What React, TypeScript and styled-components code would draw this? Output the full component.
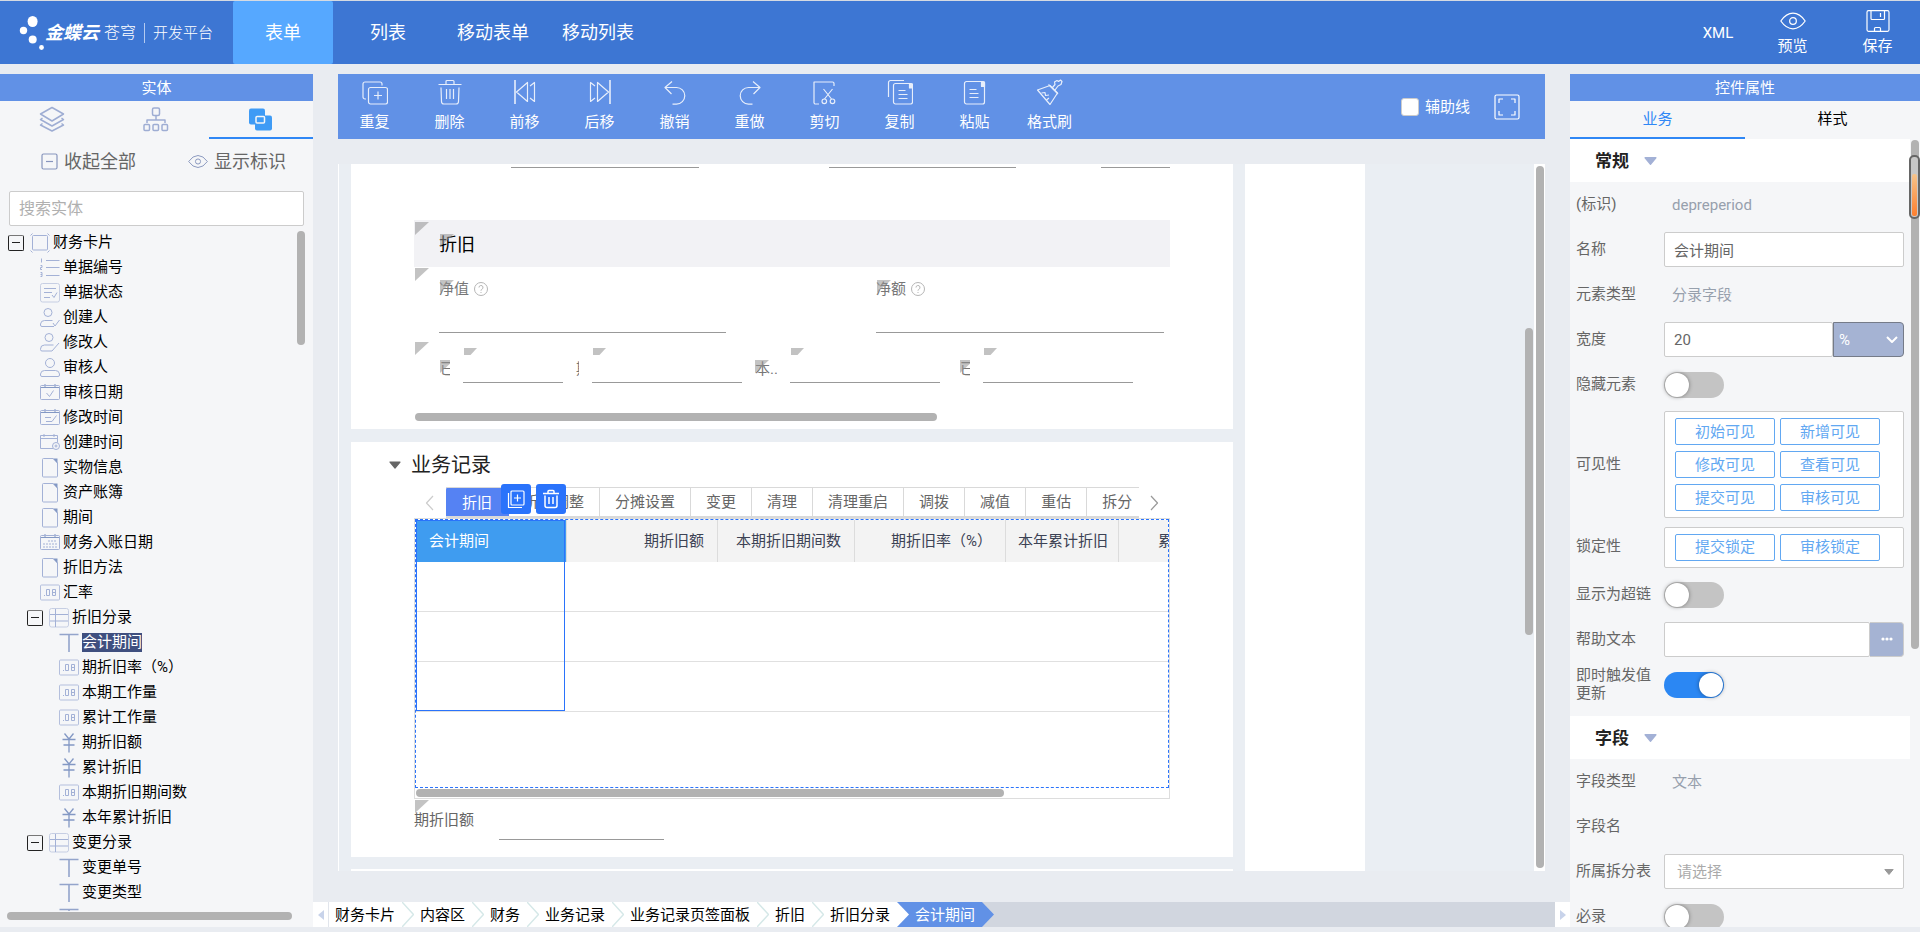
import React from 'react';
import styled, { createGlobalStyle } from 'styled-components';

const fontStack = `Roboto, "Noto Sans CJK SC", sans-serif`;

const GlobalStyle = createGlobalStyle`
  *, *::before, *::after { box-sizing: border-box; }
  body { margin: 0; background: #e9ecf1; font-family: ${fontStack}; font-size: 15px; line-height: 18px; color: #000; }
  button, input, select { font: inherit; color: inherit; margin: 0; padding: 0; border: 0; background: none; border-radius: 0; }
  button { cursor: pointer; white-space: nowrap; }
  a { color: inherit; text-decoration: none; }
  ul, ol { list-style: none; margin: 0; padding: 0; }
  h1, h2, h3, p { margin: 0; font: inherit; }
  svg { display: block; flex: none; }
`;

/* ---------- page frame ---------- */

const Page = styled.div`
  display: flex;
  flex-direction: column;
  height: 100vh;
  min-width: 1200px;
  overflow: hidden;
  border-top: 1px solid #d5dae2;
`;

const Header = styled.header`
  display: flex;
  align-items: stretch;
  flex: none;
  height: 63px;
  color: #fff;
  background: #3d76d3;
`;

const Brand = styled.a`
  display: flex;
  align-items: center;
  width: 233px;
  padding-left: 18px;
  white-space: nowrap;
`;

const BrandName = styled.strong`
  margin-left: 1px;
  font-size: 18px;
  font-style: italic;
  font-weight: 700;
`;

const BrandSub = styled.span`
  margin-left: 5px;
  font-size: 16px;
  font-weight: 300;
`;

const BrandPlatform = styled.span`
  display: flex;
  align-items: center;
  height: 20px;
  margin-left: 8px;
  padding-left: 8px;
  font-weight: 300;
  border-left: 1px solid #b4caf0;
`;

const MainNav = styled.nav`
  display: flex;
  gap: 5px;
  flex: 1;
`;

const NavItem = styled.button<{ $active?: boolean }>`
  width: 100px;
  font-size: 18px;
  border-radius: 2px;
  background: ${(p) => (p.$active ? '#56a8ff' : 'transparent')};
`;

const HeaderActions = styled.div`
  display: flex;
  align-items: center;
`;

const HeaderAction = styled.button`
  display: flex;
  flex-direction: column;
  align-items: center;
  justify-content: center;
  width: 85px;
  gap: 5px;
  height: 63px;
  &:first-child { width: 64px; }
`;

const Workspace = styled.div`
  display: flex;
  flex: 1;
  min-height: 0;
  padding: 10px 0 5px;
`;

const PanelTitle = styled.h2`
  display: flex;
  align-items: center;
  justify-content: center;
  flex: none;
  height: 27px;
  color: #fff;
  background: #6191e6;
`;

const PanelTabs = styled.div`
  display: flex;
  flex: none;
  height: 38px;
`;

const PanelTab = styled.button<{ $active?: boolean }>`
  display: flex;
  align-items: center;
  justify-content: center;
  flex: 1;
  color: ${(p) => (p.$active ? '#2f87f5' : '#000')};
  border-bottom: 2px solid ${(p) => (p.$active ? '#2f87f5' : 'transparent')};
`;

const Thumb = styled.div`
  border-radius: 4px;
  background: #b2b2b2;
`;

/* ---------- entity panel ---------- */

const EntityPanel = styled.aside`
  position: relative;
  display: flex;
  flex-direction: column;
  flex: none;
  width: 313px;
  background: #f5f6f8;
`;

const TreeTools = styled.div`
  display: flex;
  justify-content: space-between;
  padding: 11px 27px 18px 41px;
`;

const TreeTool = styled.button`
  display: flex;
  align-items: center;
  gap: 6px;
  height: 23px;
  color: #666;
  font-size: 18px;
`;

const SearchBox = styled.input`
  height: 35px;
  margin: 0 9px;
  padding: 0 9px;
  font-size: 16px;
  background: #fff;
  border: 1px solid #ccc;
  border-radius: 2px;
  &::placeholder { color: #b0b0b0; opacity: 1; }
`;

const Tree = styled.ul`
  flex: 1;
  min-height: 0;
  margin-top: 4px;
  overflow: hidden;
`;

const TreeRow = styled.li<{ $level: number }>`
  display: flex;
  align-items: center;
  height: 25px;
  padding-left: ${(p) => [8, 40, 27, 59][p.$level]}px;
`;

const Expander = styled.button`
  display: flex;
  align-items: center;
  justify-content: center;
  width: 16px;
  height: 16px;
  margin-right: 6px;
  border: 1px solid #222;
  border-top-color: #777;
  border-radius: 2px;
  &::before { content: ''; width: 8px; height: 1px; background: #222; }
`;

const TreeLabel = styled.button<{ $selected?: boolean }>`
  height: 19px;
  margin-left: 3px;
  line-height: 19px;
  color: ${(p) => (p.$selected ? '#fff' : '#000')};
  background: ${(p) => (p.$selected ? '#3f4f7f' : 'transparent')};
`;

const TreeScrollX = styled(Thumb)`
  height: 8px;
  margin: 1px 21px 7px 7px;
`;

const TreeScrollY = styled(Thumb)`
  position: absolute;
  top: 157px;
  right: 8px;
  width: 8px;
  height: 114px;
`;

/* ---------- designer ---------- */

const Designer = styled.main`
  display: flex;
  flex-direction: column;
  flex: 1;
  min-width: 0;
`;

const Toolbar = styled.div`
  display: flex;
  align-items: center;
  flex: none;
  height: 65px;
  margin: 0 25px;
  color: #fff;
  background: #6191e6;
`;

const ToolButton = styled.button`
  display: flex;
  flex-direction: column;
  align-items: center;
  gap: 8px;
  width: 75px;
  height: 55px;
  padding-right: 2px;
  svg { opacity: 0.85; }
`;

const ToolbarEnd = styled.div`
  display: flex;
  align-items: center;
  gap: 24px;
  margin-left: auto;
  padding-right: 25px;
`;

const GuideToggle = styled.label`
  display: flex;
  align-items: center;
  gap: 6px;
  input {
    appearance: none;
    width: 18px;
    height: 18px;
    background: #fff;
    border: 1px solid #ccc;
    border-radius: 3px;
  }
`;

const Canvas = styled.div`
  position: relative;
  display: flex;
  flex: 1;
  min-height: 0;
  margin: 25px 25px 0;
  padding-left: 12px;
  overflow: hidden;
  background: #eaeef3;
  border-left: 1px solid #fff;
`;

const Cards = styled.div`
  display: flex;
  flex-direction: column;
  flex: 882 1 0;
  min-width: 0;
`;

const SideSheet = styled.div`
  flex: 120 1 0;
  margin-left: 12px;
  background: #fff;
`;

const Spare = styled.div`
  flex: 169 1 0;
`;

const Track = styled.div`
  width: 11px;
  padding: 2px 1px 3px 2px;
  background: #fff;
  display: flex;
`;

const TrackThumb = styled(Thumb)`
  flex: 1;
`;

const InnerThumb = styled(Thumb)`
  position: absolute;
  top: 164px;
  right: 12px;
  width: 8px;
  height: 307px;
`;

const Card = styled.section`
  flex: none;
  margin-bottom: 13px;
  padding: 0 63px 8px;
  background: #fff;
  &:nth-of-type(2) { margin-bottom: 12px; }
`;

const LineInput = styled.input`
  display: block;
  width: 100%;
  height: 32px;
  border-bottom: 1px solid #999;
`;

const CutFields = styled.div`
  display: grid;
  grid-template-columns: 97fr 188fr 130fr 187fr 85fr 69fr;
  height: 56px;
  ${LineInput} { height: 4px; }
  ${LineInput}:nth-child(1) { grid-column: 2; }
  ${LineInput}:nth-child(2) { grid-column: 4; }
  ${LineInput}:nth-child(3) { grid-column: 6; }
`;

const Corner = styled.i<{ $x?: number; $y?: number }>`
  position: absolute;
  left: ${(p) => p.$x ?? 1}px;
  top: ${(p) => p.$y ?? 1}px;
  width: 14px;
  height: 13px;
  background: rgba(145, 145, 145, 0.55);
  clip-path: polygon(0 0, 100% 0, 0 100%);
`;

const GroupTitle = styled.div`
  position: relative;
  display: flex;
  align-items: center;
  height: 47px;
  padding: 2px 0 0 25px;
  font-size: 18px;
  background: #f2f2f5;
`;

const FieldPair = styled.div`
  position: relative;
  display: grid;
  grid-template-columns: 287fr 288fr;
  column-gap: 150px;
  height: 74px;
  padding: 13px 6px 8px 25px;
`;

const Field = styled.label`
  position: relative;
  display: flex;
  flex-direction: column;
  justify-content: space-between;
  height: 53px;
  color: #777;
  ${LineInput} { height: 24px; }
`;

const FieldLabel = styled.span`
  display: flex;
  align-items: center;
  gap: 5px;
`;

const MiniRow = styled.div`
  position: relative;
  display: flex;
  gap: 13px;
  height: 72px;
  padding: 7px 0 0 26px;
`;

const MiniLabel = styled.span<{ $w: number; $pad?: number }>`
  position: relative;
  width: ${(p) => p.$w}px;
  height: 18px;
  margin-top: 12px;
  padding-left: ${(p) => p.$pad ?? 0}px;
  overflow: hidden;
  color: #777;
  white-space: nowrap;
`;

const MiniField = styled.span<{ $w: number }>`
  position: relative;
  width: ${(p) => p.$w}px;
  height: 35px;
  &::before {
    content: '';
    position: absolute;
    left: 1px;
    top: 0;
    width: 13px;
    height: 7px;
    background: #c2c2c2;
    clip-path: polygon(0 0, 100% 0, 50% 100%, 0 100%);
  }
  ${LineInput} { height: 35px; }
`;

const FormScroll = styled(Thumb)`
  width: 69%;
  height: 8px;
  margin: 0 0 0 1px;
`;

const CardTitle = styled.button`
  display: flex;
  align-items: center;
  gap: 10px;
  height: 45px;
  margin-left: -25px;
  font-size: 20px;
  color: #222;
`;

const TabStrip = styled.div`
  position: relative;
  display: flex;
  align-items: center;
  height: 31px;
`;

const TabArrow = styled.button`
  display: flex;
  justify-content: center;
  flex: none;
  width: 32px;
  padding-right: 2px;
  &:last-of-type { padding: 0; width: 31px; }
`;

const TabList = styled.div`
  display: flex;
  flex: 1;
  min-width: 0;
  height: 31px;
  overflow: hidden;
  border-top: 1px solid #d9d9d9;
  border-bottom: 2px solid #d9d9d9;
`;

const Tab = styled.button<{ $active?: boolean }>`
  flex: none;
  height: ${(p) => (p.$active ? '31px' : '28px')};
  margin: ${(p) => (p.$active ? '-1px 0 -2px' : '0')};
  padding: ${(p) => (p.$active ? '0 16px' : '0 15px')};
  color: ${(p) => (p.$active ? '#fff' : '#666')};
  background: ${(p) => (p.$active ? '#5582f3' : '#fff')};
  border-right: 1px solid ${(p) => (p.$active ? '#5582f3' : '#d9d9d9')};
  border-radius: ${(p) => (p.$active ? '3px 0 0 3px' : '0')};
`;

const QuickActions = styled.div`
  position: absolute;
  left: 87px;
  top: -3px;
  display: flex;
  gap: 5px;
`;

const QuickAction = styled.button`
  display: flex;
  align-items: center;
  justify-content: center;
  width: 30px;
  height: 30px;
  color: #fff;
  background: #2a73fb;
  border-radius: 3px;
`;

const GridFrame = styled.div`
  height: 281px;
  border: 1px solid #ddd;
`;

const GridBox = styled.div`
  position: relative;
  height: 269px;
  overflow: hidden;
  border: 1px dashed #2a73fb;
`;

const Grid = styled.table`
  width: 816px;
  table-layout: fixed;
  border-collapse: separate;
  border-spacing: 0;
  th {
    height: 42px;
    padding: 0 13px;
    font-weight: 400;
    text-align: right;
    white-space: nowrap;
    color: #3c4254;
    background: #f3f3f3;
    border-right: 1px solid #dcdcdc;
  }
  th:nth-child(5) { padding: 0 10px; }
  th:first-child {
    text-align: left;
    color: #fff;
    background: #3f9cf0;
  }
  td {
    height: 50px;
    padding: 0;
    border-bottom: 1px solid #e0e0e0;
  }
`;

const ColumnOutline = styled.div`
  position: absolute;
  left: 0;
  top: 0;
  width: 149px;
  height: 191px;
  border: 1px solid #2a73fb;
`;

const GridScroll = styled(Thumb)`
  width: 78%;
  height: 8px;
  margin: 1px 0 0 1px;
`;

const SummaryField = styled.label`
  position: relative;
  display: flex;
  gap: 25px;
  height: 50px;
  padding-top: 12px;
  color: #666;
  ${LineInput} { width: 165px; height: 29px; }
`;

const Crumbs = styled.nav`
  display: flex;
  flex: none;
  height: 25px;
  margin-top: 31px;
  background: #d1d6df;
`;

const CrumbArrow = styled.button<{ $end?: boolean }>`
  display: flex;
  align-items: center;
  justify-content: center;
  width: 15px;
  margin-left: ${(p) => (p.$end ? 'auto' : '0')};
  background: #fff;
`;

const CrumbList = styled.ol`
  display: flex;
  height: 25px;
  border-left: 1px solid #e1e5ec;
`;

const Crumb = styled.li<{ $current?: boolean }>`
  display: flex;
  align-items: center;
  color: ${(p) => (p.$current ? '#fff' : '#000')};
  background: ${(p) => (p.$current ? '#6191e6' : '#fff')};
  a { margin: 0 7px 0 6px; white-space: nowrap; }
`;

/* ---------- properties panel ---------- */

const PropsPanel = styled.aside`
  position: relative;
  display: flex;
  flex-direction: column;
  flex: none;
  width: 350px;
  overflow: hidden;
  background: #f5f6f8;
`;

const PropsBody = styled.div`
  flex: 1;
  min-height: 0;
  overflow: hidden;
  padding-right: 10px;
`;

const Section = styled.button`
  display: flex;
  align-items: center;
  gap: 15px;
  width: 100%;
  height: 43px;
  padding-left: 25px;
  color: #222;
  font-size: 17px;
  font-weight: 700;
  background: #fff;
`;

const SectionGap = styled.div`
  height: 9px;
`;

const PropRow = styled.div<{ $h?: number }>`
  display: grid;
  grid-template-columns: 88px 1fr;
  align-items: center;
  height: ${(p) => p.$h ?? 45}px;
  padding: 0 6px;
  color: #666;
`;

const PropLabel = styled.label`
  padding: 0 12px 2px 0;
`;

const Plain = styled.output`
  padding-left: 8px;
  color: #97a0ad;
`;

const TextBox = styled.input`
  flex: 1;
  width: 100%;
  min-width: 0;
  height: 35px;
  padding: 0 9px;
  background: #fff;
  border: 1px solid #ccc;
  border-radius: 2px;
`;

const Joined = styled.div`
  display: flex;
`;

const SelectWrap = styled.span<{ $unit?: boolean }>`
  position: relative;
  display: block;
  width: ${(p) => (p.$unit ? '71px' : '100%')};
  svg {
    position: absolute;
    right: ${(p) => (p.$unit ? 6 : 10)}px;
    top: 14px;
    pointer-events: none;
  }
`;

const SelectBox = styled.select<{ $unit?: boolean }>`
  appearance: none;
  width: 100%;
  height: 35px;
  padding-left: ${(p) => (p.$unit ? 5 : 12)}px;
  color: ${(p) => (p.$unit ? '#fff' : '#aaa')};
  background: ${(p) => (p.$unit ? '#a5b3d3' : '#fff')};
  border: 1px solid ${(p) => (p.$unit ? '#757b88' : '#ccc')};
  border-radius: ${(p) => (p.$unit ? '0 4px 4px 0' : '2px')};
`;

const MoreButton = styled.button`
  display: flex;
  align-items: center;
  justify-content: center;
  width: 34px;
  height: 35px;
  background: #a5b3d3;
  border: 1px solid #ccc;
  border-left: 0;
  border-radius: 0 4px 4px 0;
`;

const Switch = styled.input`
  appearance: none;
  display: block;
  width: 60px;
  height: 26px;
  padding: 1px;
  border-radius: 13px;
  background: #c4c4c4;
  &::before {
    content: '';
    display: block;
    width: 24px;
    height: 24px;
    border-radius: 50%;
    background: #fff;
    box-shadow: 0 0 4px rgba(0, 0, 0, 0.4);
  }
  &:checked { background: #2b87f3; }
  &:checked::before { margin-left: auto; }
`;

const OptionBox = styled.div`
  display: grid;
  grid-template-columns: 100px 100px;
  gap: 6px 5px;
  padding: 6px 10px;
  background: #fff;
  border: 1px solid #ccc;
  border-radius: 2px;
`;

const Option = styled.button`
  height: 27px;
  line-height: 24px;
  color: #62a8f2;
  border: 1px solid #62a8f2;
  border-radius: 2px;
`;

const PropsScroll = styled(Thumb)`
  position: absolute;
  top: 66px;
  right: 1px;
  width: 8px;
  height: 509px;
`;

const Gauge = styled.div`
  position: absolute;
  top: 81px;
  right: 0;
  width: 11px;
  height: 64px;
  padding: 17px 1px 1px;
  border: 2px solid #666;
  border-radius: 5px;
  background: #c8c8c8;
  &::before {
    content: '';
    display: block;
    width: 5px;
    height: 42px;
    border-radius: 2px;
    background: linear-gradient(#f6c48c, #ff7f2e);
  }
`;

/* ---------- icons ---------- */

type IconProps = { w?: number; h?: number; box?: string; color?: string; sw?: number; children: React.ReactNode };

const Icon = ({ w = 26, h = 26, box, color = 'currentColor', sw = 1.2, children }: IconProps) => (
  <svg width={w} height={h} viewBox={box ?? `0 0 ${w} ${h}`} fill="none" stroke={color} strokeWidth={sw} strokeLinejoin="round" aria-hidden="true">
    {children}
  </svg>
);

const Down = ({ color, w = 12, h = 8 }: { color: string; w?: number; h?: number }) => (
  <Icon w={w} h={h} box="0 0 12 8" color={color}><path d="M1 1h10L6 7z" fill={color} /></Icon>
);

const toolIcons: Record<string, React.ReactNode> = {
  重复: <><rect x="6.5" y="8.5" width="19" height="16.5" rx="2" /><path d="M4 20H3a2 2 0 0 1-2-2V5a2 2 0 0 1 2-2h15a2 2 0 0 1 2 2v1.5M16 12.5v8M12 16.5h8" /></>,
  删除: <><path d="M1.5 5.5h23M9 5V2.5a1 1 0 0 1 1-1h6a1 1 0 0 1 1 1V5M4 8.5l.5 14a2.5 2.5 0 0 0 2.5 2.5h12a2.5 2.5 0 0 0 2.5-2.5l.5-14" /><path d="M9.500 10v10M13 10v10M16.500 10v10" /></>,
  前移: <><path d="M3 1v24" strokeWidth="1.6" /><path d="M4.500 13L15.500 3.500v19zM18 7l4.500-3.500v19L18 19" /></>,
  后移: <><path d="M23 1v24" strokeWidth="1.6" /><path d="M21.500 13L10.500 3.500v19zM8 7L3.500 3.500v19L8 19" /></>,
  撤销: <path d="M10 2.500L3 8.500l6.500 6.500M3 8.500h11.500a8.300 8.300 0 0 1 0 16.600h-4" />,
  重做: <path d="M16 2.500l7 6-6.500 6.500M23 8.500H11.500a8.300 8.300 0 0 0 0 16.600h4" />,
  剪切: <><path d="M7 25H3.500a1.500 1.500 0 0 1-1.500-1.500V3h18.500a1.500 1.500 0 0 1 1.500 1.500V7M11.500 10l8 10M20.500 10l-8 10" /><circle cx="12.300" cy="22.300" r="2.300" /><circle cx="20.500" cy="22.300" r="2.300" /></>,
  复制: <><path d="M1.500 18V3.500a2 2 0 0 1 2-2H17" /><path d="M8.500 4.500h15a2 2 0 0 1 2 2V23a2 2 0 0 1-2 2h-15a2 2 0 0 1-2-2V6.500a2 2 0 0 1 2-2z" /><path d="M22.500 4.500v4.500h3V5z" fill="currentColor" /><path d="M11.500 11.500h7M11.500 15.500h9M11.500 19.500h9" /></>,
  粘贴: <><path d="M4.500 2.500h16a2 2 0 0 1 2 2V23a2 2 0 0 1-2 2h-16a2 2 0 0 1-2-2V4.500a2 2 0 0 1 2-2z" /><path d="M19.500 2.500v5h3V3z" fill="currentColor" /><path d="M7.500 10.500h7M7.500 14.500h9M7.500 18.500h9" /></>,
  格式刷: <><path d="M13 6.500L.5 11l12.500 14.500 7.500-11.500z" /><path d="M11.500 5.500l9.500 9.500M15.500 8.500l2.500-3-.5-2.500 2.500-1.500 1.500 1 2-1.500 1.500 1.500-1 3-3 1.500-3 4M4.500 14l3.500-.5.500 3 3.500-.5M9.500 21l2.500-2" /></>,
};

const ink = '#a3b1d6';
const calendar = <><path d="M.5 4.500h19M5 1v3M15 1v3" stroke="#8398c4" /><rect x=".5" y="2.500" width="19" height="14" rx="1" /></>;
const doc = <><path d="M13 .5H3.500a1 1 0 0 0-1 1v16.500a1 1 0 0 0 1 1h13a1 1 0 0 0 1-1V5z" /><path d="M13 .5h4.500v5z" fill="#8398c4" stroke="none" /></>;

const treeIcons: Record<string, React.ReactNode> = {
  root: <><rect x="2.500" y="2.500" width="15" height="14.500" rx="1" /><path d="M.5 2.500l2-2M17.500.5l2 2M.5 17.500l2 2M17.500 19.500l2-2" /></>,
  number: <><path d="M6 2.500h13.500M6 9.500h13.500M6 17.500h13.500" /><path d="M1.500.5v4M.5 7.500H2v2H.5v2H2M.5 14.500H2v4H.5M.5 16.500H2" /></>,
  status: <><rect x=".5" y=".5" width="19" height="18.500" rx="2" stroke="#c6cee3" /><path d="M4 5.500h12M4 9.500h8M4 14.500h6M12 12l2 2.500 3-5" /></>,
  creator: <><circle cx="8" cy="4.500" r="4" /><path d="M14 18.500H2a1.500 1.500 0 0 1-1.500-1.500v-1a4 4 0 0 1 4-3.500h8M13 15l2 3 4.500-6" /></>,
  editor: <><circle cx="9" cy="4.500" r="4" /><path d="M19 10l-7 8H2a1.500 1.500 0 0 1-1.500-1.500V16a4 4 0 0 1 4-4h9" /></>,
  user: <><circle cx="10" cy="5" r="4.500" /><path d="M2 18.500a1.500 1.500 0 0 1-1.500-1.500v-1a4 4 0 0 1 4-3.500h11a4 4 0 0 1 4 3.500v1a1.500 1.500 0 0 1-1.500 1.500z" /></>,
  dateCheck: <>{calendar}<path d="M6.500 10l3 3.500 4-6" /></>,
  dateEdit: <>{calendar}<path d="M5 9.500h6M6 13.500h6l4.500-6" /></>,
  dateNew: <><path d="M13 15.500H.5v-13h17v7M.5 5.500h17M4 1v3M14 1v3" /><circle cx="16" cy="13" r="3.500" /><path d="M14.500 13h3M16 11.500v3" /></>,
  dateGrid: <>{calendar}<path d="M8 8h9M3 11h14M3 14h14" strokeDasharray="2 1" /></>,
  doc,
  decimal: <><rect x=".5" y="2" width="19" height="15" rx="1" stroke="#b4bfdd" /><path d="M4.500 12v1M6.500 6.500h3v6h-3zM12.500 6.500h3v6h-3zM12.500 9.500h3" /></>,
  entry: <><rect x=".5" y=".5" width="19" height="18.500" rx="2" stroke="#c6cee3" /><path d="M1 6.500h18M6.500 1v18M1 13h18" /></>,
  text: <path d="M.5 1.500h19M10 1.500V19" strokeWidth="1.600" stroke="#93a4cb" />,
  money: <path d="M5.500.5L10 6l4.500-5.500M10 6v13.500M3.500 6.500h13M4.500 12h11" strokeWidth="1.300" stroke="#8398c4" />,
};

const Eye = ({ w, h, color }: { w: number; h: number; color?: string }) => (
  <Icon w={w} h={h} box="0 0 25 17" color={color}>
    <path d="M.8 8.500Q6 1 12.500 1t11.700 7.500Q19 16 12.500 16T.8 8.500z" /><circle cx="12.500" cy="8.500" r="3.200" />
  </Icon>
);

const Help = () => (
  <Icon w={14} h={14} color="#b5b5b5" sw={1}><circle cx="7" cy="7" r="6.500" /><path d="M5 5.500a2 2 0 1 1 2.800 1.800c-.6.3-.8.600-.8 1.400M7 10v1" /></Icon>
);

const CrumbJoin = ({ from, to }: { from: string; to: string }) => (
  <svg width="12" height="25" viewBox="0 0 12 25" aria-hidden="true">
    <path d="M0 0h12v25H0z" fill={to} /><path d="M0 0l12 12.500L0 25z" fill={from} />
    {from === to && <path d="M0 0l11.500 12.500L0 25" fill="none" stroke="#d5e8e8" strokeWidth="1.500" />}
  </svg>
);

/* ---------- data ---------- */

type Node = { level: number; icon: string; label: string; open?: boolean; selected?: boolean };

const tree: Node[] = [
  { level: 0, icon: 'root', label: '财务卡片', open: true },
  { level: 1, icon: 'number', label: '单据编号' },
  { level: 1, icon: 'status', label: '单据状态' },
  { level: 1, icon: 'creator', label: '创建人' },
  { level: 1, icon: 'editor', label: '修改人' },
  { level: 1, icon: 'user', label: '审核人' },
  { level: 1, icon: 'dateCheck', label: '审核日期' },
  { level: 1, icon: 'dateEdit', label: '修改时间' },
  { level: 1, icon: 'dateNew', label: '创建时间' },
  { level: 1, icon: 'doc', label: '实物信息' },
  { level: 1, icon: 'doc', label: '资产账簿' },
  { level: 1, icon: 'doc', label: '期间' },
  { level: 1, icon: 'dateGrid', label: '财务入账日期' },
  { level: 1, icon: 'doc', label: '折旧方法' },
  { level: 1, icon: 'decimal', label: '汇率' },
  { level: 2, icon: 'entry', label: '折旧分录', open: true },
  { level: 3, icon: 'text', label: '会计期间', selected: true },
  { level: 3, icon: 'decimal', label: '期折旧率（%）' },
  { level: 3, icon: 'decimal', label: '本期工作量' },
  { level: 3, icon: 'decimal', label: '累计工作量' },
  { level: 3, icon: 'money', label: '期折旧额' },
  { level: 3, icon: 'money', label: '累计折旧' },
  { level: 3, icon: 'decimal', label: '本期折旧期间数' },
  { level: 3, icon: 'money', label: '本年累计折旧' },
  { level: 2, icon: 'entry', label: '变更分录', open: true },
  { level: 3, icon: 'text', label: '变更单号' },
  { level: 3, icon: 'text', label: '变更类型' },
  { level: 3, icon: 'text', label: '' },
];

const cardTabs = ['折旧', '折旧调整', '分摊设置', '变更', '清理', '清理重启', '调拨', '减值', '重估', '拆分'];
const columns: [string, number][] = [['会计期间', 151], ['期折旧额', 151], ['本期折旧期间数', 137], ['期折旧率（%）', 151], ['本年累计折旧', 113], ['累计折旧', 113]];
const crumbs = ['财务卡片', '内容区', '财务', '业务记录', '业务记录页签面板', '折旧', '折旧分录', '会计期间'];
const visibility = ['初始可见', '新增可见', '修改可见', '查看可见', '提交可见', '审核可见'];

/* ---------- parts ---------- */

const AppHeader = () => (
  <Header>
    <Brand href="#">
      <Icon w={26} h={34} box="18 14 26 34" color="none">
        <g fill="#fff"><ellipse cx="32.600" cy="19.500" rx="5" ry="5.500" /><circle cx="23.500" cy="28.500" r="3.700" /><circle cx="32.700" cy="37.500" r="4" /><circle cx="41.500" cy="45.500" r="2.400" /></g>
      </Icon>
      <BrandName>金蝶云</BrandName>
      <BrandSub>苍穹</BrandSub>
      <BrandPlatform>开发平台</BrandPlatform>
    </Brand>
    <MainNav>
      {['表单', '列表', '移动表单', '移动列表'].map((n, i) => <NavItem key={n} $active={i === 0}>{n}</NavItem>)}
    </MainNav>
    <HeaderActions>
      <HeaderAction>XML</HeaderAction>
      <HeaderAction><Eye w={26} h={22} />预览</HeaderAction>
      <HeaderAction>
        <Icon w={24} h={22} box="0 0 24 22"><rect x="1" y=".7" width="22" height="20.600" rx="1.500" /><path d="M5 1v7.500a1 1 0 0 0 1 1h11.500a1 1 0 0 0 1-1V1M14.500 3v4M8.500 21v-2.500a1 1 0 0 1 1-1h4a1 1 0 0 1 1 1V21" /></Icon>
        保存
      </HeaderAction>
    </HeaderActions>
  </Header>
);

const Entities = () => (
  <EntityPanel>
    <PanelTitle>实体</PanelTitle>
    <PanelTabs>
      <PanelTab aria-label="图层">
        <Icon color="#9eadd3" sw={1.500}><path d="M13 1.500l11.500 6.500L13 15 1.500 8zM3.500 12l-2 1.500L13 20l11.500-6.500-2-1.500M3.500 17.500l-2 1.500L13 25l11.500-6-2-1.500" /></Icon>
      </PanelTab>
      <PanelTab aria-label="结构">
        <Icon color="#9eadd3" sw={1.500}><rect x="9.500" y="2" width="7" height="7.500" rx="1.500" /><path d="M13 9.500V14M4 17v-3h18v3" /><rect x="1" y="18.500" width="5.500" height="6" rx="1" /><rect x="10" y="18.500" width="5.500" height="6" rx="1" /><rect x="19" y="18.500" width="5.500" height="6" rx="1" /></Icon>
      </PanelTab>
      <PanelTab $active aria-label="实体">
        <Icon color="none"><rect x="1" y="2.500" width="16" height="16" rx="2" fill="#3f9bf5" /><rect x="7" y="9.500" width="17" height="15" rx="2" fill="#3f9bf5" /><rect x="8" y="10.500" width="8.500" height="6.500" rx="1" stroke="#f5f6f8" strokeWidth="1.500" /></Icon>
      </PanelTab>
    </PanelTabs>
    <TreeTools>
      <TreeTool><Icon w={17} h={17} color="#8795bd"><rect x="1" y="1" width="15" height="15" rx="1.500" /><path d="M5 8.500h7" /></Icon>收起全部</TreeTool>
      <TreeTool><Eye w={20} h={15} color="#8795bd" />显示标识</TreeTool>
    </TreeTools>
    <SearchBox placeholder="搜索实体" aria-label="搜索实体" />
    <Tree>
      {tree.map((n, i) => (
        <TreeRow key={i} $level={n.level}>
          {n.open && <Expander aria-label="收起" />}
          <Icon w={20} h={20} color={ink} sw={1}>{treeIcons[n.icon]}</Icon>
          <TreeLabel $selected={n.selected}>{n.label}</TreeLabel>
        </TreeRow>
      ))}
    </Tree>
    <TreeScrollX />
    <TreeScrollY />
  </EntityPanel>
);

const DepreciationCard = () => (
  <Card>
    <CutFields>
      <LineInput readOnly aria-label="字段一" /><LineInput readOnly aria-label="字段二" /><LineInput readOnly aria-label="字段三" />
    </CutFields>
    <GroupTitle><Corner $y={2} />折旧<Corner $x={26} $y={14} /></GroupTitle>
    <FieldPair>
      <Corner />
      {['净值', '净额'].map((t) => (
        <Field key={t}><FieldLabel>{t}<Help /></FieldLabel><Corner $y={0} /><LineInput readOnly /></Field>
      ))}
    </FieldPair>
    <MiniRow>
      <Corner />
      <MiniLabel $w={10}>已<Corner $x={0} $y={0} /></MiniLabel>
      <MiniField $w={100}><LineInput readOnly aria-label="已" /></MiniField>
      <MiniLabel $w={3}>期</MiniLabel>
      <MiniField $w={150}><LineInput readOnly aria-label="期" /></MiniField>
      <MiniLabel $w={22}>本..<Corner $x={0} $y={0} /></MiniLabel>
      <MiniField $w={150}><LineInput readOnly aria-label="本" /></MiniField>
      <MiniLabel $w={17} $pad={7}>已<Corner $x={7} $y={0} /></MiniLabel>
      <MiniField $w={150}><LineInput readOnly aria-label="已" /></MiniField>
    </MiniRow>
    <FormScroll />
  </Card>
);

const RecordsCard = () => (
  <Card>
    <CardTitle><Down color="#666" w={12} h={10} />业务记录</CardTitle>
    <TabStrip>
      <TabArrow aria-label="上一页"><Icon w={9} h={16} color="#ccc"><path d="M8 1L1.500 8 8 15" /></Icon></TabArrow>
      <TabList>
        {cardTabs.map((t, i) => <Tab key={t} $active={i === 0}>{t}</Tab>)}
      </TabList>
      <QuickActions>
        <QuickAction aria-label="复制页签">
          <Icon w={20} h={20}><rect x="5" y="2" width="13" height="14" rx="1" /><path d="M2.500 4v14.500H16M11.500 5.500v7M8 9h7" /></Icon>
        </QuickAction>
        <QuickAction aria-label="删除页签">
          <Icon w={18} h={20} sw={1.500}><path d="M1 4.500h16M6 4.500V2.500a1 1 0 0 1 1-1h4a1 1 0 0 1 1 1v2M3 6.500v10a2 2 0 0 0 2 2h8a2 2 0 0 0 2-2v-10M7 8v7M11 8v7" /></Icon>
        </QuickAction>
      </QuickActions>
      <TabArrow aria-label="下一页"><Icon w={9} h={16} color="#999"><path d="M1 1l6.500 7L1 15" /></Icon></TabArrow>
    </TabStrip>
    <GridFrame>
      <GridBox>
        <Grid>
          <colgroup>{columns.map(([c, w]) => <col key={c} width={w} />)}</colgroup>
          <thead><tr>{columns.map(([c]) => <th key={c}>{c}</th>)}</tr></thead>
          <tbody>{[0, 1, 2].map((r) => <tr key={r}>{columns.map(([c]) => <td key={c} />)}</tr>)}</tbody>
        </Grid>
        <ColumnOutline />
      </GridBox>
      <GridScroll />
    </GridFrame>
    <SummaryField><Corner />期折旧额<LineInput readOnly /></SummaryField>
  </Card>
);

const Prop = ({ label, id, h, children }: { label: string; id: string; h?: number; children?: React.ReactNode }) => (
  <PropRow $h={h}><PropLabel htmlFor={id}>{label}</PropLabel>{children}</PropRow>
);

const Properties = () => (
  <PropsPanel>
    <PanelTitle>控件属性</PanelTitle>
    <PanelTabs><PanelTab $active>业务</PanelTab><PanelTab>样式</PanelTab></PanelTabs>
    <PropsBody>
      <Section>常规<Down color={ink} w={13} h={10} /></Section>
      <Prop label="(标识)" id="key"><Plain id="key">depreperiod</Plain></Prop>
      <Prop label="名称" id="name"><TextBox id="name" defaultValue="会计期间" /></Prop>
      <Prop label="元素类型" id="kind"><Plain id="kind">分录字段</Plain></Prop>
      <Prop label="宽度" id="width">
        <Joined>
          <TextBox id="width" defaultValue="20" />
          <SelectWrap $unit>
            <SelectBox $unit aria-label="单位"><option>%</option></SelectBox>
            <Icon w={12} h={8} color="#fff" sw={2}><path d="M1 1l5 5 5-5" /></Icon>
          </SelectWrap>
        </Joined>
      </Prop>
      <Prop label="隐藏元素" id="hidden"><Switch id="hidden" type="checkbox" role="switch" /></Prop>
      <Prop label="可见性" id="visible" h={115}>
        <OptionBox id="visible">{visibility.map((v) => <Option key={v}>{v}</Option>)}</OptionBox>
      </Prop>
      <Prop label="锁定性" id="lock" h={50}>
        <OptionBox id="lock"><Option>提交锁定</Option><Option>审核锁定</Option></OptionBox>
      </Prop>
      <Prop label="显示为超链" id="link"><Switch id="link" type="checkbox" role="switch" /></Prop>
      <Prop label="帮助文本" id="help">
        <Joined>
          <TextBox id="help" />
          <MoreButton aria-label="更多"><Icon w={12} h={6} color="none"><g fill="#fff"><circle cx="2" cy="2" r="1.600" /><circle cx="6" cy="2" r="1.600" /><circle cx="10" cy="2" r="1.600" /></g></Icon></MoreButton>
        </Joined>
      </Prop>
      <Prop label="即时触发值更新" id="instant"><Switch id="instant" type="checkbox" role="switch" defaultChecked /></Prop>
      <SectionGap />
      <Section>字段<Down color={ink} w={13} h={10} /></Section>
      <Prop label="字段类型" id="ftype"><Plain id="ftype">文本</Plain></Prop>
      <Prop label="字段名" id="fname"><Plain id="fname" /></Prop>
      <Prop label="所属拆分表" id="split">
        <SelectWrap><SelectBox id="split"><option>请选择</option></SelectBox><Down color="#999" w={10} h={8} /></SelectWrap>
      </Prop>
      <Prop label="必录" id="required"><Switch id="required" type="checkbox" role="switch" /></Prop>
    </PropsBody>
    <PropsScroll />
    <Gauge />
  </PropsPanel>
);

export default function App() {
  return (
    <Page>
      <GlobalStyle />
      <AppHeader />
      <Workspace>
        <Entities />
        <Designer>
          <Toolbar>
            {Object.entries(toolIcons).map(([name, icon]) => (
              <ToolButton key={name}><Icon>{icon}</Icon>{name}</ToolButton>
            ))}
            <ToolbarEnd>
              <GuideToggle><input type="checkbox" />辅助线</GuideToggle>
              <button aria-label="全屏">
                <Icon><rect x="1" y="1" width="24" height="24" rx="1.500" /><path d="M5 9V5h4M17 5h4v4M21 17v4h-4M9 21H5v-4" /></Icon>
              </button>
            </ToolbarEnd>
          </Toolbar>
          <Canvas>
            <Cards><DepreciationCard /><RecordsCard /><Card /></Cards>
            <SideSheet />
            <Spare />
            <Track><TrackThumb /></Track>
            <InnerThumb />
          </Canvas>
          <Crumbs aria-label="路径">
            <CrumbArrow aria-label="向左"><Icon w={6} h={10} color="none"><path d="M6 0v10L0 5z" fill="#c8d3ea" /></Icon></CrumbArrow>
            <CrumbList>
              {crumbs.map((c, i) => {
                const last = i === crumbs.length - 1;
                const here = last ? '#6191e6' : '#fff';
                const next = last ? '#d1d6df' : i === crumbs.length - 2 ? '#6191e6' : '#fff';
                return <Crumb key={c} $current={last}><a href="#">{c}</a><CrumbJoin from={here} to={next} /></Crumb>;
              })}
            </CrumbList>
            <CrumbArrow $end aria-label="向右"><Icon w={6} h={10} color="none"><path d="M0 0v10l6-5z" fill="#c8d3ea" /></Icon></CrumbArrow>
          </Crumbs>
        </Designer>
        <Properties />
      </Workspace>
    </Page>
  );
}
